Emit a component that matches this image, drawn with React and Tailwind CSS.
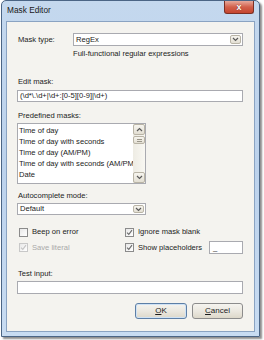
const font = { fontFamily: '"Liberation Sans", Arial, sans-serif' };

const Chevron = ({ up, color = "#5a5a5a" }) => (
  <svg width="7" height="5" viewBox="0 0 7 5">
    <path d={up ? "M1 4 L3.5 1.5 L6 4" : "M1 1 L3.5 3.5 L6 1"} fill="none" stroke={color} strokeWidth="1.2" />
  </svg>
);

const DropButton = () => (
  <div className="flex h-full w-[11px] items-center justify-center rounded-[2px] border border-[#b9b4a6] bg-gradient-to-b from-[#f7f5ef] to-[#e3dfd3]">
    <Chevron />
  </div>
);

const Combo = ({ value, className }) => (
  <div className={`flex items-center border border-[#a9aab0] bg-white pl-[2px] pr-[1px] py-[1px] ${className}`}>
    <span className="flex-1 leading-none">{value}</span>
    <DropButton />
  </div>
);

const Check = ({ checked, disabled, label }) => (
  <div className="flex items-center gap-[4px]">
    <div
      className={`flex h-[9px] w-[9px] items-center justify-center border bg-gradient-to-br from-[#e8e8e8] to-white ${
        disabled ? "border-[#c8c8c8]" : "border-[#8b8b8b]"
      }`}
    >
      {checked && (
        <svg width="7" height="7" viewBox="0 0 7 7">
          <path d="M1 3.6 L2.8 5.4 L6 1.2" fill="none" stroke={disabled ? "#c4c4c4" : "#6c6c6c"} strokeWidth="1.1" />
        </svg>
      )}
    </div>
    <span className={disabled ? "text-[#a9a9a9]" : "text-[#1b1b1b]"}>{label}</span>
  </div>
);

const masks = [
  "Time of day",
  "Time of day with seconds",
  "Time of day (AM/PM)",
  "Time of day with seconds (AM/PM)",
  "Date",
  "Telephone number",
];

export default function App() {
  return (
    <div className="h-[340px] w-[264px] bg-white pl-[1px]" style={font}>
      <div className="flex h-[337px] w-[259px] flex-col rounded-t-[5px] border border-[#4b6585] bg-gradient-to-b from-[#c4d8ee] via-[#bcd2ec] to-[#c8dcf2] shadow-[2px_2px_2px_rgba(0,0,0,0.45)]">
        <div className="flex h-[20px] items-start">
          <span className="mt-[5px] ml-[5px] flex-1 text-[8.3px] leading-none text-[#1a1a1a]">Mask Editor</span>
          <div className="mr-[5px] flex h-[13px] w-[30px] items-center justify-center rounded-b-[3px] border border-t-0 border-[#7b2f24] bg-gradient-to-b from-[#e6a99c] via-[#d2604b] to-[#c5452e]">
            <span className="text-[9px] font-bold leading-none text-white [text-shadow:0_0_1px_#5a1a10]">x</span>
          </div>
        </div>
        <div className="mx-[4px] mb-[4px] flex-1 border border-[#8aa3c2] bg-[#f4f3ef] pl-[10px] pr-[11px] pt-[11px] text-[7.6px] text-[#1b1b1b]">
          <div className="flex items-start">
            <span className="mt-[3px] ml-[1px] w-[55px] leading-none">Mask type:</span>
            <Combo value="RegEx" className="h-[13px] flex-1" />
          </div>
          <div className="mt-[3px] h-[10px] pl-[56px] leading-[10px]">Full-functional regular expressions</div>

          <div className="mt-[18px] h-[10px] pl-[1px] leading-[10px]">Edit mask:</div>
          <div className="mt-[3px] flex h-[12px] items-center border border-[#a9aab0] bg-white pl-[2px] leading-none">
            {"(\\d*\\.\\d+|\\d+:[0-5][0-9]|\\d+)"}
          </div>

          <div className="mt-[9px] h-[10px] pl-[1px] leading-[10px]">Predefined masks:</div>
          <div className="mt-[2px] flex h-[61px] w-[129px] border border-[#a9aab0] bg-white">
            <div className="flex-1 overflow-hidden whitespace-nowrap pl-[1px] pt-[1px]">
              {masks.map((m) => (
                <div key={m} className="h-[11px] leading-[11px]">
                  {m}
                </div>
              ))}
            </div>
            <div className="flex w-[12px] flex-col bg-gradient-to-r from-[#eeece4] to-[#f8f7f2]">
              <div className="flex h-[11px] items-center justify-center rounded-[2px] border border-[#b9b4a6] bg-gradient-to-b from-[#f7f5ef] to-[#e3dfd3]">
                <Chevron up />
              </div>
              <div className="mt-[1px] flex h-[8px] flex-col items-center justify-center gap-[1px] rounded-[2px] border border-[#b9b4a6] bg-gradient-to-b from-[#f7f5ef] to-[#e3dfd3]">
                <div className="h-px w-[5px] bg-[#9a968a]" />
                <div className="h-px w-[5px] bg-[#9a968a]" />
              </div>
              <div className="flex-1" />
              <div className="flex h-[11px] items-center justify-center rounded-[2px] border border-[#b9b4a6] bg-gradient-to-b from-[#f7f5ef] to-[#e3dfd3]">
                <Chevron />
              </div>
            </div>
          </div>

          <div className="mt-[7px] h-[10px] pl-[1px] leading-[10px]">Autocomplete mode:</div>
          <Combo value="Default" className="mt-[2px] h-[12px] w-[129px]" />

          <div className="mt-[12px] flex h-[10px] items-center pl-[2px]">
            <div className="w-[106px]">
              <Check label="Beep on error" />
            </div>
            <Check checked label="Ignore mask blank" />
          </div>
          <div className="mt-[4px] flex h-[13px] items-center pl-[2px]">
            <div className="w-[106px]">
              <Check checked disabled label="Save literal" />
            </div>
            <div className="flex-1">
              <Check checked label="Show placeholders" />
            </div>
            <div className="flex h-[13px] w-[34px] items-center border border-[#a9aab0] bg-white pl-[3px] leading-none">
              _
            </div>
          </div>

          <div className="mt-[15px] h-[10px] pl-[1px] leading-[10px]">Test input:</div>
          <div className="mt-[2px] h-[13px] border border-[#a9aab0] bg-white" />

          <div className="mt-[9px] flex justify-end gap-[5px] text-[8px]">
            <button className="flex h-[16px] w-[52px] items-center justify-center rounded-[3px] border border-[#5d7fa6] bg-gradient-to-b from-[#f5f4ef] via-[#ebe8e0] to-[#ddd8ca] shadow-[inset_0_0_0_1px_#cfe2f5]">
              <span><span className="underline">O</span>K</span>
            </button>
            <button className="flex h-[16px] w-[51px] items-center justify-center rounded-[3px] border border-[#8c8c8c] bg-gradient-to-b from-[#f5f4ef] via-[#ebe8e0] to-[#ddd8ca]">
              <span><span className="underline">C</span>ancel</span>
            </button>
          </div>
        </div>
      </div>
    </div>
  );
}
